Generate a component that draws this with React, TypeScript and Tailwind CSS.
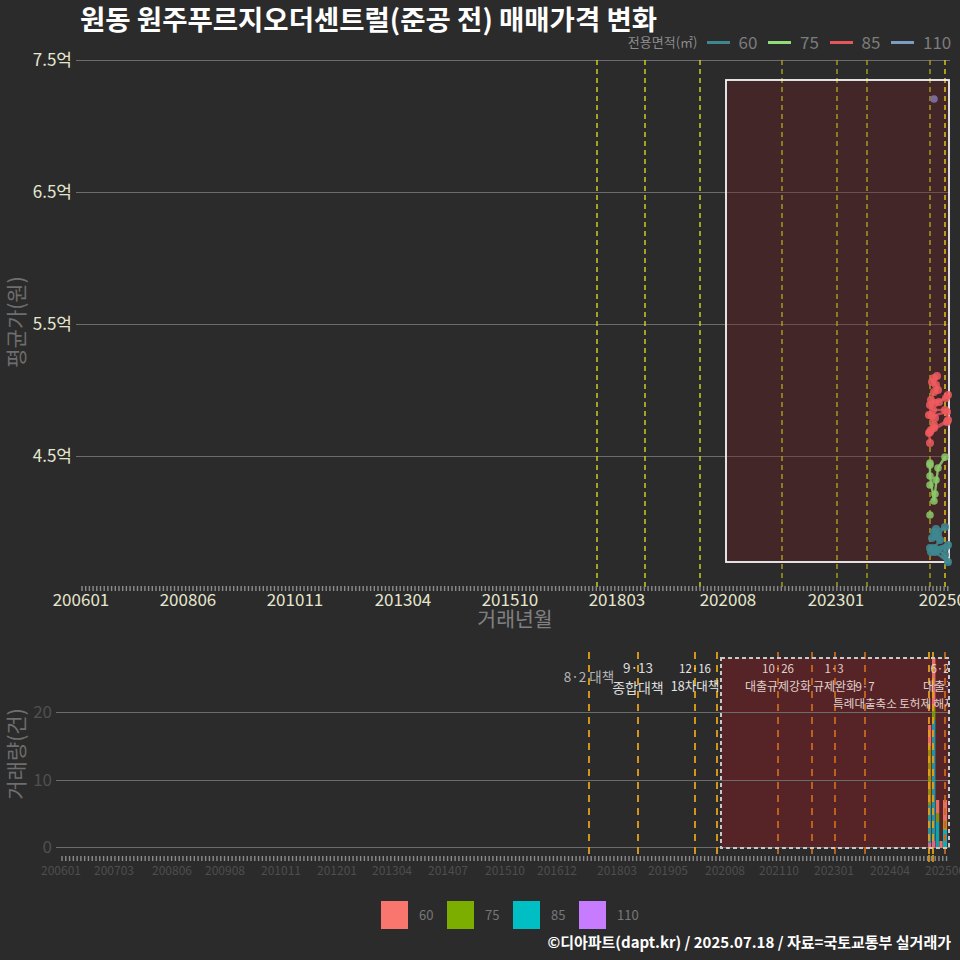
const font = "font-['Noto_Sans_CJK_KR','Noto_Sans',sans-serif]"

const topGrid = [
	{ y: 60, label: "7.5억" },
	{ y: 192, label: "6.5억" },
	{ y: 324, label: "5.5억" },
	{ y: 456, label: "4.5억" },
]
const topPolicy = [597, 645, 700, 782, 837, 867, 930, 945]
const topMonths = [
	[81, "200601"],
	[188, "200806"],
	[295, "201011"],
	[403, "201304"],
	[510, "201510"],
	[617, "201803"],
	[728, "202008"],
	[836, "202301"],
	[947, "202506"],
] as const

const red = [[934,378],[937,376],[932,382],[936,385],[938,390],[934,392],[931,400],[935,403],[939,402],[948,395],[946,398],[930,405],[933,410],[945,410],[947,412],[932,416],[935,418],[929,415],[934,425],[931,430],[948,420],[947,422],[930,432],[934,428],[929,433],[930,443]]
const green = [[945,457],[930,463],[930,465],[938,468],[930,476],[936,480],[930,485],[935,494],[934,501],[930,515]]
const teal = [[936,529],[934,532],[945,527],[938,535],[932,538],[940,540],[934,548],[948,545],[945,548],[930,548],[931,552],[938,550],[945,555],[948,562],[935,552]]

const line = (pts: number[][]) => pts.map((p) => p.join(",")).join(" ")

function TopChart() {
	const ticks = Array.from({ length: 235 }, (_, i) => 82 + i * 3.7)
	return (
		<svg viewBox="0 52 960 588" className={`h-[588px] w-[960px] overflow-visible ${font}`}>
			{topGrid.map((g) => (
				<g key={g.y}>
					<line x1={76} x2={950} y1={g.y + 0.5} y2={g.y + 0.5} stroke="#6c6c6c" strokeWidth={1} />
					<text x={72} y={g.y + 6} textAnchor="end" fontSize={17} fill="#e6e6cc">
						{g.label}
					</text>
				</g>
			))}
			<rect x={726} y={80} width={223} height={482} fill="#6e1c22" fillOpacity={0.35} />
			{topPolicy.map((x) => (
				<line key={x} x1={x} x2={x} y1={60} y2={590} stroke={x > 940 ? "#e6d019" : x > 726 ? "#b0a01c" : "#d8d81c"} strokeWidth={1.4} strokeDasharray="5 4" />
			))}
			<rect x={726} y={80} width={223} height={482} fill="none" stroke="#f5f5f5" strokeWidth={1.8} />

			<polyline points={line(red)} fill="none" stroke="#e4575c" strokeWidth={2.4} opacity={0.8} />
			<polyline points="945,457 938,468 934,501 930,476 930,465" fill="none" stroke="#8bc96a" strokeWidth={2.4} opacity={0.9} />
			<polyline points={line(teal)} fill="none" stroke="#3f8790" strokeWidth={2.4} opacity={0.9} />
			{red.map(([x, y]) => (
				<circle key={`r${x}-${y}`} cx={x} cy={y} r={4} fill="#ee5a5e" opacity={0.85} />
			))}
			{green.map(([x, y]) => (
				<circle key={`g${x}-${y}`} cx={x} cy={y} r={3.8} fill="#8bc96a" opacity={0.85} />
			))}
			{teal.map(([x, y]) => (
				<circle key={`t${x}-${y}`} cx={x} cy={y} r={4} fill="#3f8790" opacity={0.9} />
			))}
			<circle cx={934} cy={99} r={3.8} fill="#7a6a96" />

			{ticks.map((x) => (
				<line key={x} x1={x} x2={x} y1={586} y2={591} stroke="#8c8c8c" strokeWidth={1.4} />
			))}
			{topMonths.map(([x, label]) => (
				<text key={label} x={x} y={606} textAnchor="middle" fontSize={17} fill="#e6e6cc">
					{label}
				</text>
			))}
			<text x={515} y={627} textAnchor="middle" fontSize={20.5} fill="#808080">
				거래년월
			</text>
			<text transform="translate(24 322) rotate(-90)" textAnchor="middle" fontSize={21} fill="#6e6e6e">
				평균가(원)
			</text>
		</svg>
	)
}

const bottomGrid = [
	{ y: 712, label: "20" },
	{ y: 780, label: "10" },
	{ y: 847, label: "0" },
]
const bottomPolicy = [589, 638, 695, 717, 778, 812, 835, 865, 929, 933, 945]
const bottomMonths = [
	[61, "200601"],
	[114, "200703"],
	[172, "200806"],
	[225, "200908"],
	[281, "201011"],
	[337, "201201"],
	[392, "201304"],
	[448, "201407"],
	[505, "201510"],
	[557, "201612"],
	[617, "201803"],
	[668, "201905"],
	[725, "202008"],
	[779, "202110"],
	[834, "202301"],
	[890, "202404"],
	[945, "202506"],
] as const

// x, width, then stacked [top, bottom, colour]
const bars: [number, number, [number, number, string][]][] = [
	[928, 3.2, [[725, 746, "#f8766d"], [746, 805, "#a3950a"], [805, 843, "#1fa5aa"], [843, 848, "#e8709a"]]],
	[932, 3.4, [[658, 707, "#f8766d"], [707, 720, "#7c9e10"], [720, 841, "#1f9fb0"], [841, 848, "#e8709a"]]],
	[936, 3.2, [[800, 813, "#f8766d"], [813, 822, "#8c9a10"], [822, 848, "#00b4ba"]]],
	[939.4, 3.3, [[841, 848, "#f8766d"]]],
	[943, 4, [[800, 820, "#f8766d"], [820, 830, "#b89a30"], [830, 848, "#00bfc4"]]],
]

const notes = [
	{ x: 589, y: 682, size: 13.5, fill: "#b4b4b4", text: "8·2 대책" },
	{ x: 638, y: 673, size: 13.5, fill: "#dcdcdc", text: "9·13" },
	{ x: 638, y: 693, size: 14, fill: "#dcdcdc", text: "종합대책" },
	{ x: 695, y: 673, size: 11.5, fill: "#e6e6e6", text: "12·16" },
	{ x: 695, y: 691, size: 12.5, fill: "#e6e6e6", text: "18차대책" },
	{ x: 778, y: 673, size: 11.5, fill: "#e0d0cc", text: "10·26" },
	{ x: 778, y: 691, size: 12, fill: "#e0d0cc", text: "대출규제강화" },
	{ x: 834, y: 673, size: 11.5, fill: "#e0d0cc", text: "1·3" },
	{ x: 835, y: 691, size: 12, fill: "#e0d0cc", text: "규제완화" },
	{ x: 865, y: 691, size: 11.5, fill: "#e0d0cc", text: "9·7" },
	{ x: 894, y: 708, size: 11.5, fill: "#e0d0cc", text: "특례대출축소 토허제 해제" },
	{ x: 940, y: 673, size: 11.5, fill: "#e0d0cc", text: "6·2" },
	{ x: 945, y: 691, size: 12, fill: "#e0d0cc", text: "대출규제" },
]

function BottomChart() {
	const ticks = Array.from({ length: 235 }, (_, i) => 62 + i * 3.78)
	return (
		<svg viewBox="0 640 960 240" className={`h-[240px] w-[960px] ${font}`}>
			<defs>
				<clipPath id="panel">
					<rect x={56} y={640} width={892} height={240} />
				</clipPath>
			</defs>
			<rect x={721} y={658} width={228} height={190} fill="#7a1f25" fillOpacity={0.55} />
			{bottomGrid.map((g) => (
				<g key={g.y}>
					<line x1={56} x2={950} y1={g.y + 0.5} y2={g.y + 0.5} stroke="#6c6c6c" strokeWidth={1} />
					<text x={52} y={g.y + 6} textAnchor="end" fontSize={17} fill="#505050">
						{g.label}
					</text>
				</g>
			))}
			{bars.map(([x, w, parts]) =>
				parts.map(([top, bottom, color]) => (
					<rect key={`${x}-${top}`} x={x} y={top} width={w} height={bottom - top} fill={color} opacity={0.9} />
				)),
			)}
			{bottomPolicy.map((x) => {
				const inPanel = x > 721 && x < 925 || x === 945
				return (
					<line key={x} x1={x} x2={x} y1={652} y2={857} stroke={inPanel ? "#c8681e" : "#e6a01a"} strokeWidth={1.8} strokeDasharray="7 6" />
				)
			})}
			<rect x={721} y={658} width={228} height={190} fill="none" stroke="#c8c8c8" strokeWidth={2} strokeDasharray="4 3" />
			<g clipPath="url(#panel)">
				{notes.map((n) => (
					<text key={`${n.x}-${n.y}`} x={n.x} y={n.y} textAnchor="middle" fontSize={n.size} fill={n.fill}>
						{n.text}
					</text>
				))}
			</g>
			{ticks.map((x) => (
				<line key={x} x1={x} x2={x} y1={856} y2={861} stroke="#8c8c8c" strokeWidth={1.4} />
			))}
			{[929, 933].map((x) => (
				<line key={x} x1={x} x2={x} y1={855} y2={862} stroke="#e6a01a" strokeWidth={1.6} />
			))}
			{bottomMonths.map(([x, label]) => (
				<text key={label} x={x} y={875} textAnchor="middle" fontSize={12} fill="#4e4e4e">
					{label}
				</text>
			))}
			<text transform="translate(24 754) rotate(-90)" textAnchor="middle" fontSize={21} fill="#6e6e6e">
				거래량(건)
			</text>
		</svg>
	)
}

const topLegend = [
	{ label: "60", bar: "bg-[#3f8790]" },
	{ label: "75", bar: "bg-[#8fdc78]" },
	{ label: "85", bar: "bg-[#e4575c]" },
	{ label: "110", bar: "bg-[#7d9cc4]" },
]
const bottomLegend = [
	{ label: "60", box: "bg-[#f8766d]" },
	{ label: "75", box: "bg-[#7cae00]" },
	{ label: "85", box: "bg-[#00bfc4]" },
	{ label: "110", box: "bg-[#c77cff]" },
]

export default function App() {
	return (
		<div className={`flex h-[960px] w-[960px] flex-col overflow-hidden bg-[#2b2b2c] ${font}`}>
			<h1 className="h-[32px] pl-[80px] text-[27.5px] leading-[36px] font-bold whitespace-nowrap text-white">
				원동 원주푸르지오더센트럴(준공 전) 매매가격 변화
			</h1>
			<div className="flex h-[20px] items-center justify-end pr-[8px]">
				<span className="mr-[9px] text-[13px] text-[#8c8c8c]">전용면적(㎡)</span>
				{topLegend.map((l) => (
					<div key={l.label} className="flex items-center">
						<span className={`h-[3px] w-[23px] ${l.bar}`} />
						<span className={`pl-[9px] text-[17px] text-[#7c7c7c] ${l.label === "110" ? "w-[38px]" : "w-[38.5px]"}`}>{l.label}</span>
					</div>
				))}
			</div>
			<TopChart />
			<BottomChart />
			<div className="mt-[21px] flex h-[28px] pl-[381px]">
				{bottomLegend.map((l) => (
					<div key={l.label} className="flex items-center">
						<span className={`h-[28px] w-[27px] ${l.box}`} />
						<span className="w-[39px] pl-[11px] text-[13px] text-[#777]">{l.label}</span>
					</div>
				))}
			</div>
			<p className="mt-[2px] pr-[9px] text-right text-[15px] font-bold whitespace-nowrap text-white">
				©디아파트(dapt.kr) / 2025.07.18 / 자료=국토교통부 실거래가
			</p>
		</div>
	)
}
